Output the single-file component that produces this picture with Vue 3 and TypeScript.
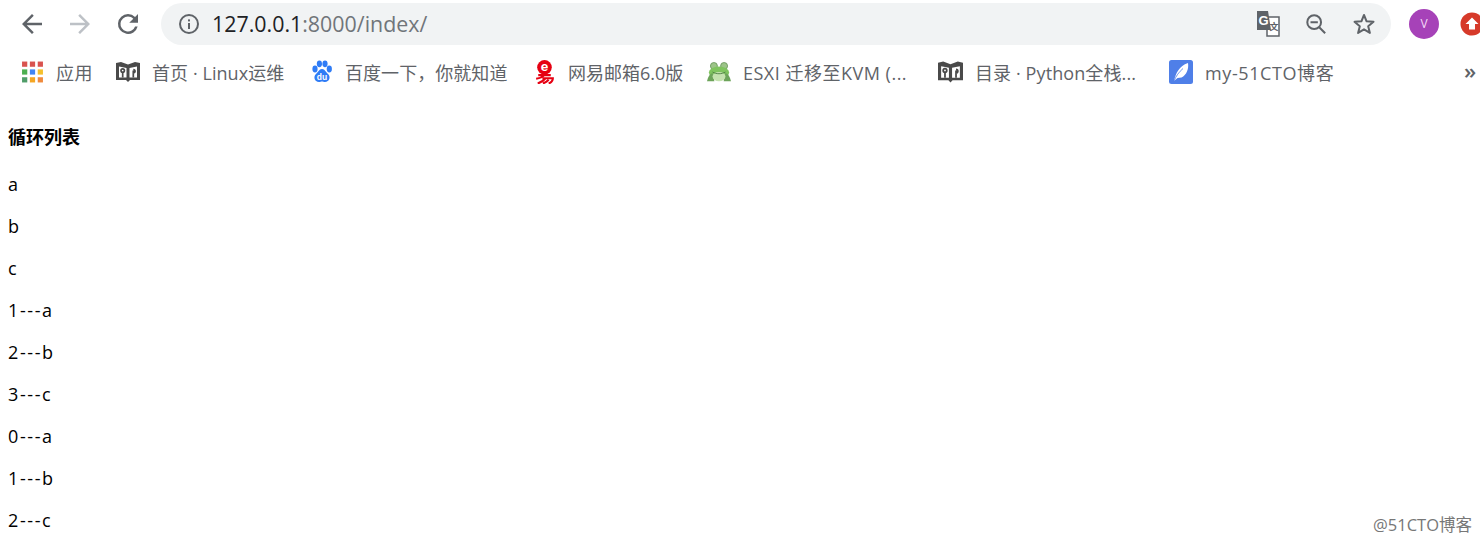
<script setup lang="ts">
interface Bookmark {
  icon: string;
  label: string;
  iconWidth: number;
  textWidth: number;
  gap: number;
  track: number;
}

const bookmarks: Bookmark[] = [
  { icon: 'apps', label: '应用', iconWidth: 23, textWidth: 37, gap: 23, track: 0.5 },
  { icon: 'book', label: '首页 · Linux运维', iconWidth: 24, textWidth: 134, gap: 25, track: 0.07 },
  { icon: 'baidu', label: '百度一下，你就知道', iconWidth: 22, textWidth: 163, gap: 25, track: 0.05 },
  { icon: 'mail', label: '网易邮箱6.0版', iconWidth: 23, textWidth: 116, gap: 23, track: 0 },
  { icon: 'frog', label: 'ESXI 迁移至KVM (...', iconWidth: 24, textWidth: 165, gap: 30, track: 0.5 },
  { icon: 'book', label: '目录 · Python全栈...', iconWidth: 25, textWidth: 163, gap: 31, track: 0.1 },
  { icon: 'feather', label: 'my-51CTO博客', iconWidth: 24, textWidth: 130, gap: 0, track: 0.6 },
];

const rows = ['a', 'b', 'c', '1---a', '2---b', '3---c', '0---a', '1---b', '2---c'];
const appColors = ['#d9534f', '#d9534f', '#d9534f', '#4caf50', '#4285f4', '#f5c02c', '#4f9d69', '#f5a623', '#f08a3c'];
</script>

<template>
  <div class="page">
    <header class="toolbar">
      <div class="nav">
        <svg class="nav-icon" viewBox="0 0 24 24"><path d="M20 11H7.8l5.6-5.6L12 4l-8 8 8 8 1.4-1.4L7.8 13H20z" fill="#5f6368" /></svg>
        <svg class="nav-icon" viewBox="0 0 24 24"><path d="M4 11h12.2l-5.6-5.6L12 4l8 8-8 8-1.4-1.4 5.6-5.6H4z" fill="#bdc1c6" /></svg>
        <svg class="nav-icon" viewBox="0 0 24 24"><path d="M17.65 6.35A7.96 7.96 0 0 0 12 4a8 8 0 1 0 7.73 10h-2.08A6 6 0 1 1 12 6c1.66 0 3.14.69 4.22 1.78L13 11h7V4z" fill="#5f6368" /></svg>
      </div>
      <div class="omnibox">
        <svg class="info" viewBox="0 0 22 22">
          <circle cx="11" cy="11" r="9" fill="none" stroke="#5f6368" stroke-width="2" />
          <rect x="10" y="10" width="2" height="6" fill="#5f6368" />
          <rect x="10" y="6.4" width="2" height="2" fill="#5f6368" />
        </svg>
        <div class="url"><span class="host">127.0.0.1</span>:8000/index/</div>
        <div class="omni-actions">
          <svg class="translate" viewBox="0 0 24 26">
            <rect x="11" y="6" width="12" height="19" fill="#fff" stroke="#5f6368" stroke-width="1.5" />
            <path d="M1 0h11l3 19H1z" fill="#5f6368" />
            <text x="2.5" y="14" class="translate-g">G</text>
            <text x="13.5" y="19" class="translate-wen">文</text>
          </svg>
          <svg class="zoom-out" viewBox="0 0 24 24">
            <circle cx="10" cy="10" r="7.5" fill="none" stroke="#5f6368" stroke-width="2.2" />
            <path d="M6 10h8M15.5 15.5l6.5 6.5" fill="none" stroke="#5f6368" stroke-width="2.2" />
          </svg>
          <svg class="star" viewBox="0 0 24 24">
            <path d="M12 3l2.6 6.3 6.9.5-5.3 4.4 1.7 6.7L12 17.3l-5.900 3.600 1.700-6.700-5.300-4.400 6.900-.5z" fill="none" stroke="#5f6368" stroke-width="2" stroke-linejoin="round" />
          </svg>
        </div>
      </div>
      <div class="avatar">V</div>
      <div class="ext">
        <svg viewBox="0 0 24 24">
          <circle cx="12" cy="12" r="11.5" fill="#d63a2a" />
          <path d="M12 5.5l6.500 6.500h-3.500v5.500H9V12H5.500z" fill="#fff" />
        </svg>
      </div>
    </header>

    <nav class="bookmarks">
      <div
        v-for="(item, i) in bookmarks"
        :key="i"
        class="bookmark"
        :style="{ marginRight: item.gap + 'px' }"
      >
        <span class="bm-icon" :style="{ width: item.iconWidth + 'px' }">
          <svg v-if="item.icon === 'apps'" viewBox="0 0 22 22">
            <rect
              v-for="(color, c) in appColors"
              :key="c"
              :x="1 + (c % 3) * 7.5"
              :y="1 + Math.floor(c / 3) * 7.5"
              width="5"
              height="5"
              :fill="color"
            />
          </svg>
          <svg v-else-if="item.icon === 'book'" viewBox="0 0 24 20">
            <path d="M0 1l5-1 7 2.500L19 0l5 1v17H14l-2 2-2-2H0z" fill="#4a4a4a" />
            <path d="M3 4.500l7.500 1.500v9.500H3zM21 4.500l-7.500 1.500v9.500H21z" fill="#fff" />
            <circle cx="6.700" cy="8.500" r="1.700" fill="none" stroke="#4a4a4a" stroke-width="1.700" />
            <path d="M6.700 10v5.500M17.300 15.500V8.500M17.300 7.500a1.700 1.700 0 0 1 0 3.500" fill="none" stroke="#4a4a4a" stroke-width="1.700" />
          </svg>
          <svg v-else-if="item.icon === 'baidu'" viewBox="0 0 22 24">
            <ellipse cx="4" cy="9" rx="2.6" ry="3.4" fill="#2f7cf6" />
            <ellipse cx="8.4" cy="3.8" rx="2.6" ry="3.4" fill="#2f7cf6" />
            <ellipse cx="14" cy="3.8" rx="2.6" ry="3.4" fill="#2f7cf6" />
            <ellipse cx="18.3" cy="9" rx="2.6" ry="3.4" fill="#2f7cf6" />
            <path d="M11 9c3 0 4 3.500 6 5 3 2.500 1.500 8-3 8-1.300 0-2-.5-3-.5s-1.700.5-3 .5c-4.500 0-6-5.500-3-8 2-1.500 3-5 6-5z" fill="#2f7cf6" />
            <text x="11" y="19.500" class="baidu-du">du</text>
          </svg>
          <svg v-else-if="item.icon === 'mail'" viewBox="0 0 20 23">
            <circle cx="10" cy="7" r="7" fill="#e60012" />
            <text x="10" y="10.500" class="mail-e">e</text>
            <path d="M4 14.500h12M10 14.500c-2 2-5 3-8 3.500M8 17.500h10c0 2.500-1.500 4-4 5M11 17.500c-2 2.500-4.500 4-7.500 5M14 19c-1.500 1.500-3 2.500-5.500 3.500" fill="none" stroke="#e60012" stroke-width="2" />
          </svg>
          <svg v-else-if="item.icon === 'frog'" viewBox="0 0 26 22">
            <circle cx="7.5" cy="4.5" r="3.8" fill="#9cc488" stroke="#5f8f50" stroke-width=".8" />
            <circle cx="18.5" cy="4.5" r="3.8" fill="#9cc488" stroke="#5f8f50" stroke-width=".8" />
            <ellipse cx="13" cy="11.5" rx="11" ry="6.5" fill="#7fc45e" />
            <path d="M0 21c1-5 3-8 6-9l2 9zM26 21c-1-5-3-8-6-9l-2 9z" fill="#6da45a" />
            <ellipse cx="13" cy="16" rx="7" ry="5" fill="#c4e2ae" />
            <path d="M6 11c4 2.500 10 2.500 14 0" fill="none" stroke="#4f7f45" stroke-width="1" />
          </svg>
          <svg v-else viewBox="0 0 24 24">
            <rect width="24" height="24" rx="2.5" fill="#4f7fe8" />
            <path d="M5 21C7 13 10 6 19 3c1 6-1.500 12-6.500 14.500L8.500 18z" fill="#fff" />
            <path d="M5 21c2-5 5-9 9-12.500" fill="none" stroke="#4f7fe8" stroke-width=".8" />
          </svg>
        </span>
        <span
          class="bm-label"
          :style="{ width: item.textWidth + 'px', letterSpacing: item.track + 'px' }"
        >{{ item.label }}</span>
      </div>
      <span class="more">»</span>
    </nav>

    <main class="content">
      <h3 class="title">循环列表</h3>
      <p v-for="(row, i) in rows" :key="i" class="row">{{ row }}</p>
    </main>

    <div class="watermark">@51CTO博客</div>
  </div>
</template>

<style scoped>
.page {
  position: relative;
  width: 1480px;
  height: 542px;
  overflow: hidden;
  background: #fff;
  font-family: "Open Sans", "Noto Sans CJK SC", sans-serif;
}
.toolbar {
  display: flex;
  align-items: center;
  height: 47px;
  padding-left: 17px;
}
.nav {
  display: flex;
  flex: none;
  gap: 18px;
  width: 144px;
}
.nav-icon {
  width: 30px;
  height: 30px;
}
.omnibox {
  display: flex;
  flex: none;
  align-items: center;
  width: 1230px;
  height: 42px;
  padding: 0 15px 0 17px;
  box-sizing: border-box;
  border-radius: 21px;
  background: #f1f3f4;
}
.info {
  width: 22px;
  height: 22px;
}
.url {
  margin-left: 12px;
  font-size: 21.4px;
  color: #70757a;
}
.host {
  color: #202124;
}
.omni-actions {
  display: flex;
  align-items: center;
  gap: 25px;
  margin-left: auto;
}
.translate {
  width: 24px;
  height: 26px;
}
.translate-g {
  font-family: "Liberation Sans", sans-serif;
  font-size: 13px;
  font-weight: 700;
  fill: #fff;
}
.translate-wen {
  font-family: "Noto Sans CJK SC", sans-serif;
  font-size: 9px;
  font-weight: 700;
  fill: #5f6368;
}
.baidu-du {
  font-family: "Liberation Sans", sans-serif;
  font-size: 8.5px;
  font-weight: 700;
  text-anchor: middle;
  fill: #fff;
}
.mail-e {
  font-family: "Liberation Sans", sans-serif;
  font-size: 13px;
  font-weight: 700;
  text-anchor: middle;
  fill: #fff;
}
.zoom-out {
  width: 22px;
  height: 22px;
}
.star {
  width: 24px;
  height: 24px;
}
.avatar {
  display: flex;
  flex: none;
  align-items: center;
  justify-content: center;
  width: 30px;
  height: 30px;
  margin-left: 18px;
  border-radius: 50%;
  background: #a642b8;
  color: #f3d9f7;
  font-size: 12px;
}
.ext {
  flex: none;
  width: 24px;
  height: 24px;
  margin-left: 21px;
}
.ext svg {
  display: block;
  width: 24px;
  height: 24px;
}
.bookmarks {
  position: relative;
  display: flex;
  align-items: center;
  height: 50px;
  padding-left: 21px;
}
.bookmark {
  display: flex;
  align-items: center;
  gap: 12px;
  flex: none;
}
.bm-icon {
  display: block;
  height: 24px;
}
.bm-icon svg {
  display: block;
  width: 100%;
  height: 100%;
}
.bm-label {
  font-size: 18px;
  color: #5f6368;
  white-space: nowrap;
}
.more {
  position: absolute;
  top: 8px;
  left: 1464px;
  font-size: 22px;
  font-weight: 600;
  color: #5f6368;
}
.content {
  padding: 28px 8px 0;
  color: #000;
  font-size: 18px;
  line-height: 24px;
}
.title {
  margin: 0 0 23px;
  font-size: 18px;
  font-weight: 700;
}
.row {
  margin: 0 0 18px;
  letter-spacing: 1.6px;
}
.watermark {
  position: absolute;
  right: 8px;
  bottom: 6px;
  font-size: 16.5px;
  color: #777;
}
</style>

<style>
body {
  background: #fff;
}
</style>
